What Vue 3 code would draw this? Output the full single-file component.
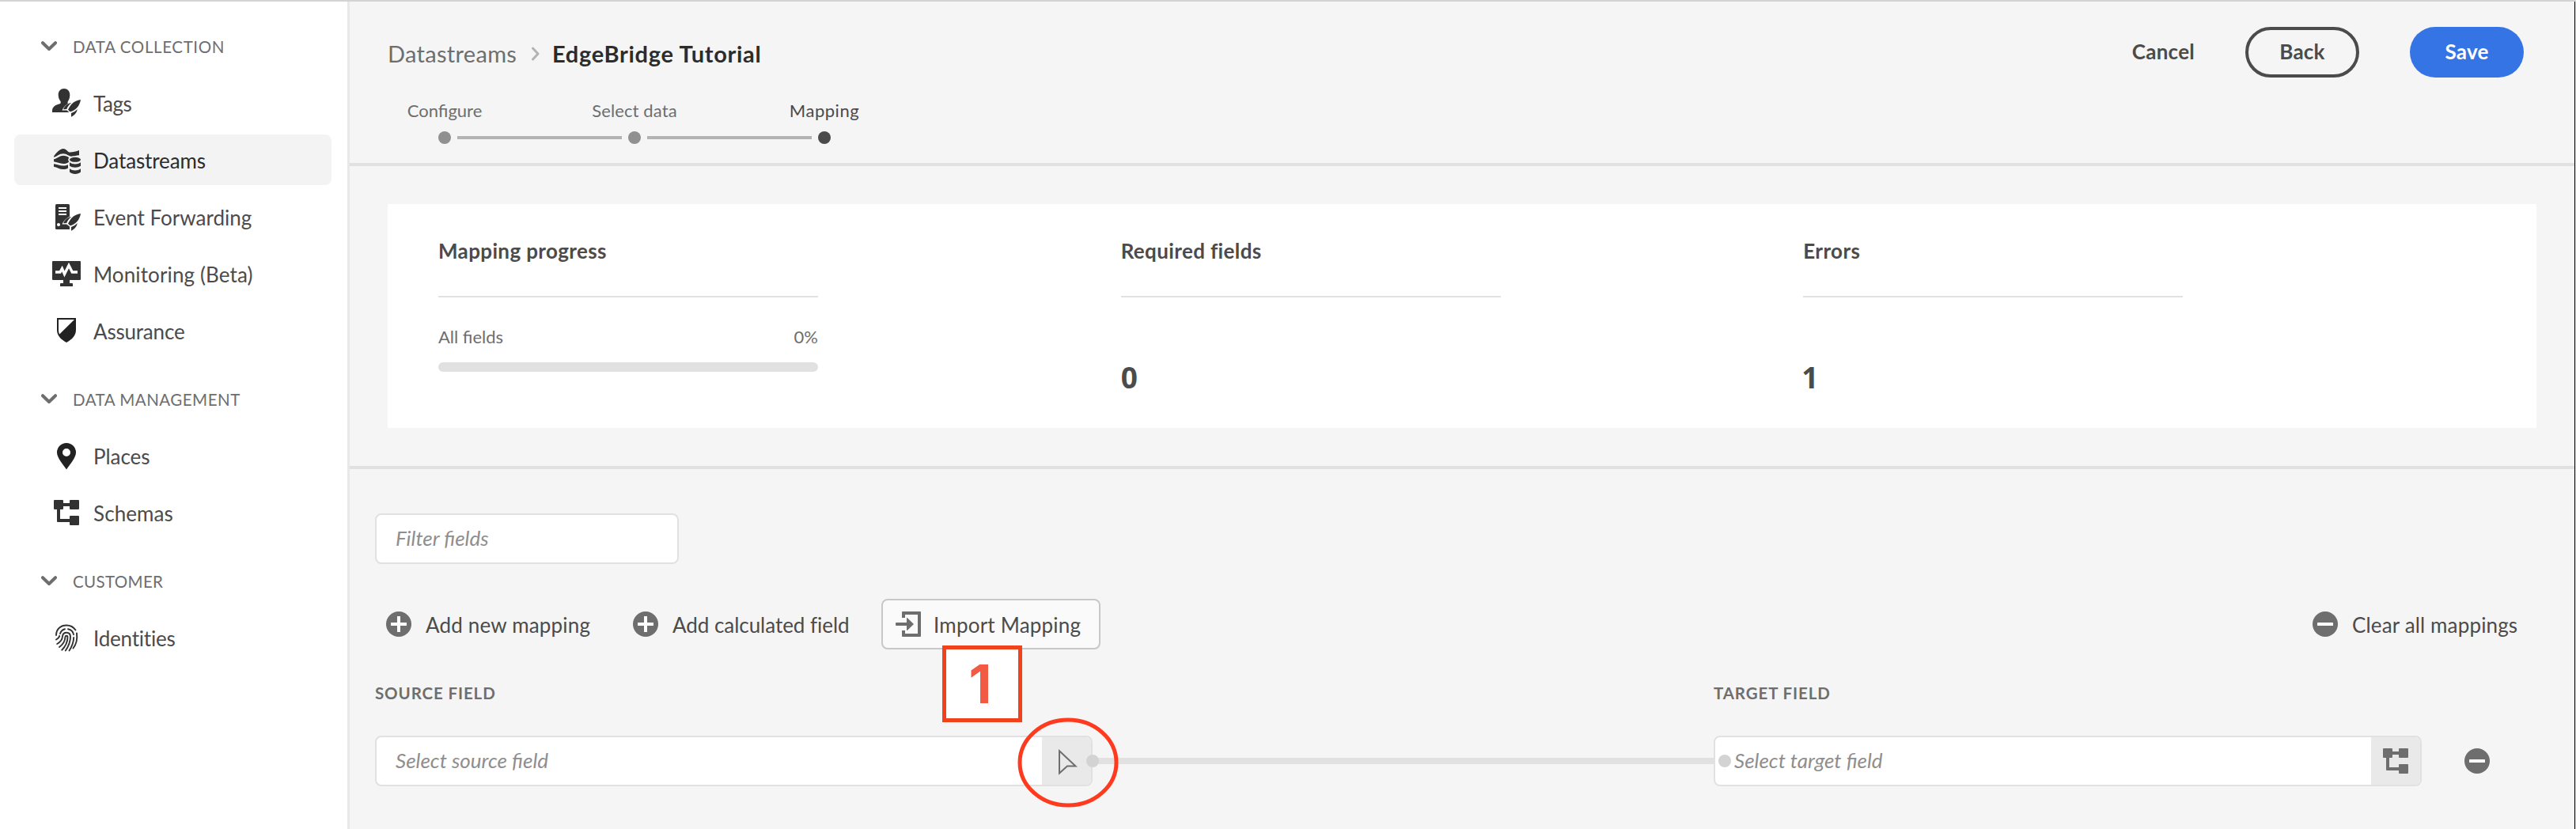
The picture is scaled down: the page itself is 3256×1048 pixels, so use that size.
<script setup>
const sections = [
  {
    title: 'DATA COLLECTION',
    track: 0.62,
    items: [
      { label: 'Tags', icon: 'tags', track: -0.44 },
      { label: 'Datastreams', icon: 'streams', track: -0.12, selected: true },
      { label: 'Event Forwarding', icon: 'forward', track: 0 },
      { label: 'Monitoring (Beta)', icon: 'monitor', track: 0.12 },
      { label: 'Assurance', icon: 'shield', track: -0.2 }
    ]
  },
  {
    title: 'DATA MANAGEMENT',
    track: 0.5,
    items: [
      { label: 'Places', icon: 'pin', track: -0.04 },
      { label: 'Schemas', icon: 'schema', track: 0.1 }
    ]
  },
  {
    title: 'CUSTOMER',
    track: 0.35,
    items: [{ label: 'Identities', icon: 'finger', track: -0.2 }]
  }
]
const steps = [
  { label: 'Configure', track: 0 },
  { label: 'Select data', track: 0.12 },
  { label: 'Mapping', track: 0.54, current: true }
]
</script>

<template>
  <div class="app">
    <nav class="sidebar">
      <section v-for="s in sections" :key="s.title" class="group">
        <h2 class="group-title">
          <svg width="20" height="14" viewBox="0 0 20 14"><path d="M2 2.200 10 10 18 2.200" fill="none" stroke="#6e6e6e" stroke-width="4" stroke-linecap="round" stroke-linejoin="round" /></svg>
          <span :style="{ letterSpacing: s.track + 'px' }">{{ s.title }}</span>
        </h2>
        <a v-for="i in s.items" :key="i.label" class="item" :class="{ selected: i.selected }">
          <svg width="36" height="36" viewBox="0 0 36 36" fill="#323232">
            <template v-if="i.icon === 'tags'">
              <path d="M15 0c-4.300 0-7.300 3.200-7.300 8 0 3.200 1.200 6 2.700 8 .7 1 .5 2.800-.7 3.200C4 20.600 0 23 0 28v2h21c4-6 4-9-.8-11-.9-.4-.9-2-.2-3 1.400-2 2.300-5 2.300-8 0-4.800-3-8-7.300-8z" />
              <path d="M37 12.500c-6 .5-10 2.500-12.500 4.500-5 1.200-9.500 5-12 10.500h6v3h4v6h2c4.500-2.500 7.500-6 8.500-10.500 2.500-3.500 4-8 4-13.500z" fill="#fff" />
              <path d="M36 14c-6.500.8-12.500 4.500-16 12.800l2.600 2.400C30 27.500 34.500 22 36 14z" />
              <path d="M24 18c-4.500.6-8.300 4-10 8.300l4.200-.3c1.200-3 3.200-6 5.800-8z" />
              <path d="M31.700 26c-1.700 2.200-4.700 4-7.700 5v4.800c4-2 7.200-5.300 7.700-9.800zM18.500 27.500l3 2.500h-5z" />
            </template>
            <template v-else-if="i.icon === 'streams'">
              <path d="M2 13.500C5 9.500 9.500 4 14 4c4 0 5.500 4.600 8.500 4.600S31 7.300 34 6v6.200c-4 .5-6 .8-9 1.400-4 .6-6-3.300-11-3.300-5.500 0-8 3.600-12 4.400z" />
              <path d="M2 17.300c4-.8 7.500-4.600 12-4.600 2.800 0 5.500 1 7.200 2.500-1.300 1.600-1.300 3.700 0 5.500C19 22.400 17 23 14 23 9.500 23 6 20.800 2 20.300z" />
              <path d="M2 23.200c4 .4 7.500 2.400 12 2.400 2.300 0 4.200-.5 6-1.300v4.200c-1.800 1-3.800 1.500-6 1.500-4.500 0-8-2.600-12-3.300z" />
              <ellipse cx="29" cy="17.800" rx="7" ry="3" />
              <path d="M22 21.300c4 3 10 3 14 0v4.500c-3.500 2.600-10.500 2.600-14 0zM22 29.200c4 3 10 3 14 0v4.300c-3.500 3.300-10.500 3.300-14 0z" />
            </template>
            <template v-else-if="i.icon === 'forward'">
              <rect x="4" y="2" width="18" height="32" rx="1.500" />
              <path d="M8 6h10v2H8zM8 10h10v2H8zM8 14h10v2H8z" fill="#fff" />
              <circle cx="8" cy="28" r="2.100" fill="#fff" />
              <path d="M37 12.500c-6 .5-10 2.500-12.500 4.500-5 1.200-9.500 5-12 10.500h6v3h4v6h2c4.500-2.500 7.500-6 8.500-10.500 2.500-3.500 4-8 4-13.500z" fill="#fff" />
              <path d="M36 14c-6.500.8-12.500 4.500-16 12.800l2.600 2.400C30 27.500 34.500 22 36 14z" />
              <path d="M24 18c-4.500.6-8.300 4-10 8.300l4.200-.3c1.200-3 3.200-6 5.800-8z" />
              <path d="M31.700 26c-1.700 2.200-4.700 4-7.700 5v4.800c4-2 7.200-5.300 7.700-9.800zM18.500 27.500l3.500 3v3.500h-5z" />
            </template>
            <template v-else-if="i.icon === 'monitor'">
              <path d="M1 2h34a1 1 0 0 1 1 1v22a1 1 0 0 1-1 1H22v4h3a1 1 0 0 1 1 1v3H10v-3a1 1 0 0 1 1-1h3v-4H1a1 1 0 0 1-1-1V3a1 1 0 0 1 1-1z" />
              <path d="M4 16h6l2.500-4.500 3 7L21 7.500l4.300 8.500H32" fill="none" stroke="#fff" stroke-width="3.400" />
            </template>
            <path v-else-if="i.icon === 'shield'" d="M6 2h24v15c0 7.500-5 12-12 16C11 29 6 24.500 6 17zM8 4v13c0 2.200.4 4 1.200 5.600L28 4z" fill="#222" fill-rule="evenodd" />
            <path v-else-if="i.icon === 'pin'" d="M18 2a12 12 0 0 0-12 12c0 6.500 7 14.500 12 21.500 5-7 12-15 12-21.500A12 12 0 0 0 18 2zm0 7a5 5 0 1 1 0 10 5 5 0 0 1 0-10z" fill="#222" />
            <path v-else-if="i.icon === 'schema'" d="M3 2h10a1 1 0 0 1 1 1v3h8V3a1 1 0 0 1 1-1h10a1 1 0 0 1 1 1v10a1 1 0 0 1-1 1H23a1 1 0 0 1-1-1v-3h-8v3a1 1 0 0 1-1 1h-3v12h12v-3a1 1 0 0 1 1-1h10a1 1 0 0 1 1 1v10a1 1 0 0 1-1 1H23a1 1 0 0 1-1-1v-3H7a1 1 0 0 1-1-1V14H3a1 1 0 0 1-1-1V3a1 1 0 0 1 1-1z" />
            <g v-else fill="none" stroke="#323232" stroke-width="1.900" stroke-linecap="round">
              <path d="M5 15C5 7 11 2.500 18 2.500c5 0 9 2.300 11.500 6M31 12.500c1 7.500-1 14.500-4.500 19" />
              <path d="M10 13c1-3 3-5 6-5.700M20 7.200c4 .8 6.500 3.300 7 7M27.200 18c-.2 6-2.700 12-5.700 16.500" />
              <path d="M5 20.500c2.500-1.200 3.800-2.700 4.300-4.700M6.200 26c4.500-2.500 6.500-5.500 6.800-9.500.3-3 2.500-4.700 5-4.700 3 0 5 2 5 5.200 0 6.500-2.700 12.500-6.200 17.500" />
              <path d="M9 30c4.700-3.300 7.200-7.500 7.500-13 .2-1.700 3-1.700 3 0 0 6.500-3 12.500-7.300 16.700" />
            </g>
          </svg>
          <span :style="{ letterSpacing: i.track + 'px' }">{{ i.label }}</span>
        </a>
      </section>
    </nav>

    <main class="main">
      <header class="header">
        <div class="topbar">
          <div class="crumbs">
            <span class="crumb">Datastreams</span>
            <svg width="12" height="18" viewBox="0 0 12 18"><path d="M2.500 2 9 9l-6.500 7" fill="none" stroke="#b3b3b3" stroke-width="3" stroke-linecap="round" stroke-linejoin="round" /></svg>
            <strong class="crumb-current">EdgeBridge Tutorial</strong>
          </div>
          <div class="buttons">
            <button class="btn quiet">Cancel</button>
            <button class="btn outline">Back</button>
            <button class="btn cta">Save</button>
          </div>
        </div>
        <div class="step-labels">
          <span v-for="s in steps" :key="s.label" :class="{ current: s.current }" :style="{ letterSpacing: s.track + 'px' }">{{ s.label }}</span>
        </div>
        <div class="track">
          <i class="dot"></i><i class="seg"></i><i class="dot"></i><i class="seg"></i><i class="dot current"></i>
        </div>
      </header>

      <section class="summary">
        <div class="card">
          <div class="col">
            <h3 class="col-title">Mapping progress</h3>
            <div class="meter-label"><span>All fields</span><span>0%</span></div>
            <div class="meter"></div>
          </div>
          <div class="col">
            <h3 class="col-title">Required fields</h3>
            <div class="count">0</div>
          </div>
          <div class="col">
            <h3 class="col-title">Errors</h3>
            <div class="count errors">1</div>
          </div>
        </div>
      </section>

      <section class="mapping">
        <div class="field filter">Filter fields</div>
        <div class="actions">
          <div class="action add-new">
            <svg width="32" height="32" viewBox="0 0 32 32"><circle cx="16" cy="16" r="16" fill="#6e6e6e" /><path d="M16 6v20M6 16h20" stroke="#fff" stroke-width="4" /></svg>
            <span>Add new mapping</span>
          </div>
          <div class="action add-calc">
            <svg width="32" height="32" viewBox="0 0 32 32"><circle cx="16" cy="16" r="16" fill="#6e6e6e" /><path d="M16 6v20M6 16h20" stroke="#fff" stroke-width="4" /></svg>
            <span>Add calculated field</span>
          </div>
          <button class="import">
            <svg width="32" height="32" viewBox="0 0 32 32" fill="#6e6e6e">
              <path d="M9 0h22a1 1 0 0 1 1 1v30a1 1 0 0 1-1 1H9a1 1 0 0 1-1-1v-7h4v4h16V4H12v4H8V1a1 1 0 0 1 1-1z" />
              <path d="M1 14h13V8.600a.6.6 0 0 1 1-.4l8 7.800-8 7.800a.6.6 0 0 1-1-.4V18H1a1 1 0 0 1-1-1v-2a1 1 0 0 1 1-1z" />
            </svg>
            <span>Import Mapping</span>
          </button>
          <div class="action clear">
            <svg width="32" height="32" viewBox="0 0 32 32"><circle cx="16" cy="16" r="16" fill="#6e6e6e" /><rect x="6" y="14" width="20" height="4" rx=".6" fill="#fff" /></svg>
            <span>Clear all mappings</span>
          </div>
        </div>
        <div class="labels"><span class="l-source">SOURCE FIELD</span><span class="l-target">TARGET FIELD</span></div>
        <div class="row">
          <div class="field source">
            <span>Select source field</span>
            <span class="picker">
              <svg width="36" height="36" viewBox="0 0 36 36"><path d="M9 5.200 29.500 24.500H19L9 33.500z" fill="none" stroke="#6e6e6e" stroke-width="2" /></svg>
            </span>
          </div>
          <div class="link"><i class="pin left"></i><i class="pin right"></i></div>
          <div class="field target">
            <span>Select target field</span>
            <span class="picker">
              <svg width="36" height="36" viewBox="0 0 36 36" fill="#6e6e6e"><path d="M3 2h10a1 1 0 0 1 1 1v3h8V3a1 1 0 0 1 1-1h10a1 1 0 0 1 1 1v10a1 1 0 0 1-1 1H23a1 1 0 0 1-1-1v-3h-8v3a1 1 0 0 1-1 1h-3v12h12v-3a1 1 0 0 1 1-1h10a1 1 0 0 1 1 1v10a1 1 0 0 1-1 1H23a1 1 0 0 1-1-1v-3H7a1 1 0 0 1-1-1V14H3a1 1 0 0 1-1-1V3a1 1 0 0 1 1-1z" /></svg>
            </span>
          </div>
          <svg class="remove" width="32" height="32" viewBox="0 0 32 32"><circle cx="16" cy="16" r="16" fill="#6e6e6e" /><rect x="6" y="14" width="20" height="4" rx=".6" fill="#fff" /></svg>
        </div>
      </section>
    </main>

    <div class="callout">1</div>
    <svg class="ring" width="128" height="114" viewBox="0 0 128 114"><ellipse cx="64" cy="57" rx="61" ry="54" fill="none" stroke="#ff3b1f" stroke-width="5" /></svg>
  </div>
</template>

<style>
body { margin: 0; background: #f5f5f5; }
</style>

<style scoped>
* { box-sizing: border-box; }
.app {
  position: relative;
  display: flex;
  width: 3256px;
  height: 1048px;
  overflow: hidden;
  border-top: 2px solid #d3d3d3;
  border-right: 1px solid #e6e6e6;
  background: #f5f5f5;
  font-family: Lato, "Open Sans", sans-serif;
  font-size: 26px;
  color: #4b4b4b;
}
svg { display: block; flex: none; }
.sidebar { flex: none; width: 442px; padding: 36px 20px 0 18px; border-right: 3px solid #e8e8e8; background: #fff; }
.group { margin-bottom: 34px; }
.group-title {
  display: flex;
  align-items: center;
  height: 60px;
  margin: 0;
  padding: 0 0 18px 34px;
  gap: 20px;
  font-size: 20.5px;
  font-weight: 400;
  color: #6e6e6e;
}
.group-title svg { margin-top: -1px; }
.item {
  display: flex;
  align-items: center;
  height: 64px;
  padding-left: 48px;
  gap: 16px;
  border-radius: 8px;
}
.item + .item { margin-top: 8px; }
.item span { padding-top: 2px; }
.item.selected { background: #f3f3f3; color: #2c2c2c; }

.main { flex: none; width: 2813px; border-right: 1px solid #000; }
.header { height: 208px; padding-top: 32px; border-bottom: 4px solid #e1e1e1; }
.topbar { display: flex; align-items: center; justify-content: space-between; height: 64px; padding: 0 64px 0 48px; }
.crumbs { display: flex; align-items: center; padding-top: 3px; font-size: 29px; }
.crumb { width: 181px; color: #6e6e6e; letter-spacing: .31px; }
.crumb-current { margin-left: 15px; font-weight: 700; color: #2c2c2c; letter-spacing: .68px; }
.buttons { display: flex; align-items: center; gap: 64px; }
.btn {
  height: 64px;
  padding: 0 0 2px;
  border: 0;
  border-radius: 32px;
  background: none;
  font: 700 26px Lato, sans-serif;
  letter-spacing: .25px;
  color: #4b4b4b;
}
.outline { width: 144px; border: 4px solid #4b4b4b; }
.cta { width: 144px; background: #3574e4; color: #fff; }
.step-labels { display: flex; margin-top: 25px; font-size: 22px; line-height: 32px; color: #6e6e6e; }
.step-labels span { width: 240px; padding-top: 1px; text-align: center; }
.step-labels .current { color: #4b4b4b; }
.track { display: flex; align-items: center; margin-top: 10px; padding-left: 112px; gap: 8px; }
.dot { width: 16px; height: 16px; border-radius: 50%; background: #909090; }
.dot.current { background: #4b4b4b; }
.seg { width: 208px; height: 4px; background: #b3b3b3; }

.summary { padding: 48px; border-bottom: 4px solid #e1e1e1; }
.card { display: grid; grid-template-columns: repeat(3, 1fr); height: 283px; padding: 39px 64px 0; background: #fff; }
.col { width: 480px; }
.col-title {
  height: 79px;
  margin: 0;
  border-bottom: 2px solid #e1e1e1;
  font-size: 26px;
  font-weight: 700;
  line-height: 40px;
  letter-spacing: .36px;
}
.meter-label { display: flex; justify-content: space-between; margin-top: 35px; font-size: 22px; line-height: 30px; color: #6e6e6e; }
.meter { height: 12px; margin-top: 17px; border-radius: 6px; background: #e1e1e1; }
.count { margin-top: 79px; font: 700 37px/44px "Open Sans", sans-serif; }
.errors { margin-left: -2px; }

.mapping { padding: 56px 0 0 32px; }
.field {
  display: flex;
  align-items: center;
  height: 64px;
  padding-left: 24px;
  border: 2px solid #e1e1e1;
  border-radius: 8px;
  background: #fff;
  font-style: italic;
  color: #8e8e8e;
}
.filter { width: 384px; padding-bottom: 2px; }
.actions { display: flex; align-items: center; margin-top: 44px; height: 64px; }
.action { display: flex; align-items: center; gap: 18px; white-space: nowrap; }
.action span { padding-top: 2px; }
.add-new { width: 312px; margin-left: 14px; letter-spacing: .18px; }
.add-calc { width: 314px; letter-spacing: -.04px; }
.import {
  display: flex;
  align-items: center;
  width: 277px;
  height: 64px;
  padding: 0 0 0 16px;
  gap: 16px;
  border: 2px solid #c8c8c8;
  border-radius: 8px;
  background: #fafafa;
  font: 26px Lato, sans-serif;
  letter-spacing: .21px;
  color: #4b4b4b;
}
.import span { padding-top: 2px; }
.clear { width: 331px; margin-left: auto; letter-spacing: .15px; }
.labels { display: flex; margin-top: 39px; font-size: 20.5px; font-weight: 700; line-height: 32px; letter-spacing: .88px; color: #6e6e6e; }
.l-source { width: 1692px; }
.row { display: flex; align-items: center; margin-top: 38px; }
.source { width: 907px; }
.target { width: 895px; }
.source > span:first-child, .target > span:first-child { flex: 1; padding-bottom: 2px; }
.picker { display: flex; align-items: center; justify-content: center; width: 62px; height: 60px; border-radius: 0 6px 6px 0; background: #e9e9e9; }
.link { position: relative; width: 785px; height: 8px; background: #e1e1e1; }
.pin { position: absolute; top: -4px; width: 16px; height: 16px; border-radius: 50%; background: #d3d3d3; z-index: 1; }
.left { left: -8px; }
.right { right: -22px; }
.remove { margin-left: 54px; }

.callout {
  position: absolute;
  left: 1191px;
  top: 814px;
  width: 101px;
  height: 97px;
  padding-right: 5px;
  border: 5px solid #f0431b;
  background: #fff;
  font: 700 67px/88px Inter, "Liberation Sans", sans-serif;
  text-align: center;
  color: #f15a43;
}
.ring { position: absolute; left: 1286px; top: 905px; z-index: 2; }
</style>
